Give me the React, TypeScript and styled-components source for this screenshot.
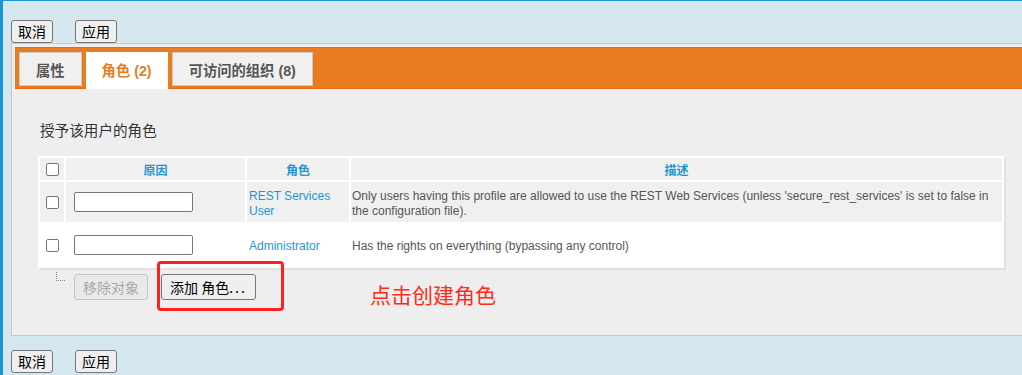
import React from "react";
import styled, { createGlobalStyle } from "styled-components";

const Global = createGlobalStyle`
  html, body { margin: 0; padding: 0; background: #d4e7ee; }
  body { font-family: "Liberation Sans", "Noto Sans CJK SC", sans-serif; }
  * { box-sizing: border-box; }
`;

const Page = styled.div`
  width: 1022px;
  height: 375px;
  overflow: hidden;
  border-top: 1px solid #1b95d1;
  border-left: 3px solid #1b95d1;
  padding-left: 8px;
  background: #d4e7ee;
`;

const ButtonBar = styled.div<{ $top: number }>`
  display: flex;
  gap: 22px;
  padding-top: ${(p) => p.$top}px;
`;

const Btn = styled.button`
  height: 23px;
  padding: 0 6px;
  font: 14px "Noto Sans CJK SC", sans-serif;
  line-height: 21px;
  color: #000;
  background: #efefef;
  border: 1px solid #767676;
  border-radius: 3px;
`;

const Panel = styled.div`
  border: 1px solid #c8c8c8;
  border-right: none;
  background: #eeeeee;
  padding: 3px 0 35px 3px;
`;

const TabBar = styled.div`
  height: 42px;
  display: flex;
  align-items: flex-start;
  gap: 4px;
  padding: 4px 0 0 4px;
  background: #e97c1f;
  border-top: 1px solid #e66a1b;
  border-bottom: 1px solid #e66a1b;
`;

const Tab = styled.div<{ $active?: boolean }>`
  display: flex;
  align-items: center;
  height: ${(p) => (p.$active ? 37 : 34)}px;
  padding: ${(p) => (p.$active ? "0 16px 3px" : "0 16px")};
  font: bold 14.3px "Liberation Sans", "Noto Sans CJK SC", sans-serif;
  color: ${(p) => (p.$active ? "#e97c1f" : "#555")};
  background: ${(p) => (p.$active ? "#fff" : "#f0f0f0")};
  border: ${(p) => (p.$active ? "none" : "1px solid #c9c9c9")};
`;

const Content = styled.div`
  padding: 31px 18px 0 25px;
`;

const Title = styled.div`
  font: 14.6px "Noto Sans CJK SC", sans-serif;
  line-height: 20px;
  color: #333;
`;

const Table = styled.table`
  margin: 16px 0 0 -2px;
  width: calc(100% + 2px);
  table-layout: fixed;
  border-collapse: separate;
  border-spacing: 2px;
  background: #fff;
  box-shadow: 2px 2px 0 #e2e2dc;
`;

const Col = styled.col<{ $w?: number }>`
  width: ${(p) => (p.$w ? `${p.$w}px` : "auto")};
`;

const Th = styled.th`
  height: 22px;
  padding: 0;
  background: #f0f0f0;
  font: bold 12px "Liberation Sans", "Noto Sans CJK SC", sans-serif;
  color: #1f95cf;
  text-align: center;
  vertical-align: middle;
`;

const Td = styled.td<{ $h: number; $shade?: boolean; $pad?: number; $center?: boolean; $text?: boolean }>`
  height: ${(p) => p.$h}px;
  padding: ${(p) => (p.$text ? 3 : 0)}px ${(p) => p.$pad ?? 2}px 0;
  background: ${(p) => (p.$shade ? "#f0f0f0" : "#fff")};
  text-align: ${(p) => (p.$center ? "center" : "left")};
  vertical-align: middle;
  font: 12px "Liberation Sans", "Noto Sans CJK SC", sans-serif;
  line-height: 15px;
  color: #555;
`;

const RoleLink = styled.a`
  color: #1f95cf;
  text-decoration: none;
`;

const Check = styled.input.attrs({ type: "checkbox" })`
  appearance: none;
  display: block;
  margin: 0 auto;
  width: 13px;
  height: 13px;
  border: 1px solid #767676;
  border-radius: 2px;
  background: #fff;
`;

const TextField = styled.input`
  display: block;
  width: 119px;
  height: 20px;
  border: 1px solid #767676;
  border-radius: 2px;
  background: #fff;
  padding: 0 3px;
`;

const Actions = styled.div`
  position: relative;
  display: flex;
  align-items: flex-start;
  margin-top: 6px;
`;

const Tree = styled.span`
  display: block;
  margin: -2px 0 0 16px;
  width: 9px;
  height: 9px;
  border-left: 1px dotted #888;
  border-bottom: 1px dotted #888;
`;

const ActionBtn = styled.button<{ $disabled?: boolean; $ml: number }>`
  margin-left: ${(p) => p.$ml}px;
  height: 26px;
  padding: 0 8px;
  font: 14px "Noto Sans CJK SC", sans-serif;
  line-height: 24px;
  color: ${(p) => (p.$disabled ? "#a8a8a8" : "#000")};
  background: ${(p) => (p.$disabled ? "#e9e9e9" : "#efefef")};
  border: 1px solid ${(p) => (p.$disabled ? "#c6c6c6" : "#767676")};
  border-radius: 3px;
`;

const Dots = styled.span`
  letter-spacing: 2px;
`;

const Highlight = styled.div`
  position: absolute;
  left: 117px;
  top: -13px;
  width: 127px;
  height: 50px;
  border: 3px solid #ff1f1f;
  border-radius: 4px;
  pointer-events: none;
`;

const Note = styled.div`
  position: absolute;
  left: 330px;
  top: 6px;
  font: 21px "Noto Sans CJK SC", sans-serif;
  line-height: 28px;
  color: #ff2a1a;
  white-space: nowrap;
`;

export default function App() {
  return (
    <Page>
      <Global />
      <ButtonBar $top={19}>
        <Btn>取消</Btn>
        <Btn>应用</Btn>
      </ButtonBar>
      <Panel>
        <TabBar>
          <Tab>属性</Tab>
          <Tab $active>角色 (2)</Tab>
          <Tab>可访问的组织 (8)</Tab>
        </TabBar>
        <Content>
          <Title>授予该用户的角色</Title>
          <Table>
            <colgroup>
              <Col $w={24} />
              <Col $w={179} />
              <Col $w={102} />
              <Col />
            </colgroup>
            <thead>
              <tr>
                <Th>
                  <Check />
                </Th>
                <Th>原因</Th>
                <Th>角色</Th>
                <Th>描述</Th>
              </tr>
            </thead>
            <tbody>
              <tr>
                <Td $h={40} $shade $center>
                  <Check />
                </Td>
                <Td $h={40} $shade $pad={8}>
                  <TextField />
                </Td>
                <Td $h={40} $shade $text>
                  <RoleLink>REST Services User</RoleLink>
                </Td>
                <Td $h={40} $shade $pad={1} $text>
                  Only users having this profile are allowed to use the REST Web Services (unless
                  'secure_rest_services' is set to false in the configuration file).
                </Td>
              </tr>
              <tr>
                <Td $h={42} $center>
                  <Check />
                </Td>
                <Td $h={42} $pad={8}>
                  <TextField />
                </Td>
                <Td $h={42} $text>
                  <RoleLink>Administrator</RoleLink>
                </Td>
                <Td $h={42} $pad={1} $text>
                  Has the rights on everything (bypassing any control)
                </Td>
              </tr>
            </tbody>
          </Table>
          <Actions>
            <Tree />
            <ActionBtn $disabled $ml={9}>
              移除对象
            </ActionBtn>
            <ActionBtn $ml={13}>
              添加 角色<Dots>...</Dots>
            </ActionBtn>
            <Highlight />
            <Note>点击创建角色</Note>
          </Actions>
        </Content>
      </Panel>
      <ButtonBar $top={14}>
        <Btn>取消</Btn>
        <Btn>应用</Btn>
      </ButtonBar>
    </Page>
  );
}
